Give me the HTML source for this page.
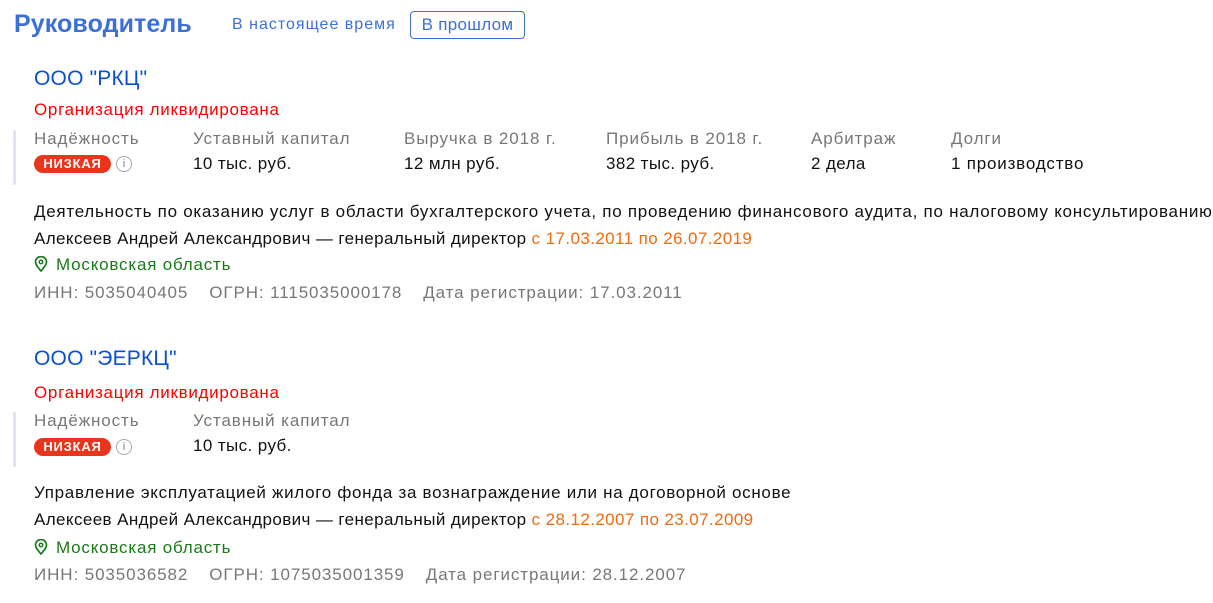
<!DOCTYPE html>
<html><head><meta charset="utf-8"><style>
body{margin:0;width:1213px;height:603px;background:#fff;font-family:"Liberation Sans",sans-serif;position:relative;overflow:hidden;color:#111}
.a{position:absolute;white-space:nowrap;line-height:20px;font-size:17px;letter-spacing:0.9px}
.h{left:14px;top:9px;font-size:25px;font-weight:bold;color:#3d6fd9;line-height:30px;letter-spacing:0.1px}
.blue{color:#3d6fd9}
.btn{left:410px;top:11px;width:113px;height:26px;border:1px solid #3d6fd9;border-radius:4px;color:#3d6fd9;text-align:center;line-height:26px;letter-spacing:0.3px}
.org{font-size:21px;color:#0a50d2;line-height:24px;letter-spacing:0.2px}
.red{color:#f00}
.lbl{color:#777}
.v{letter-spacing:0.4px}
.bar{position:absolute;left:13px;width:3px;background:#dde2f5;border-radius:2px}
.badge{position:absolute;left:34px;width:77px;height:18px;background:#e8351c;border-radius:9px;color:#fff;font-weight:bold;font-size:13px;text-align:center;line-height:18px;letter-spacing:.8px}
.info{position:absolute;left:116px;width:14px;height:14px;border:1.5px solid #aaa;border-radius:50%;color:#aaa;font-size:11px;text-align:center;line-height:14px;font-weight:bold}
.or{color:#f06a0e}
.gr{color:#1a7a1a}
.gray{color:#777}
.g{display:inline-block;width:21px}
</style></head><body>
<div class="a h">Руководитель</div>
<div class="a blue" style="left:232px;top:15px;font-size:16px;letter-spacing:1px">В настоящее время</div>
<div class="a btn">В прошлом</div>

<div class="a org" style="left:34px;top:67px">ООО "РКЦ"</div>
<div class="a red" style="left:34px;top:100px;letter-spacing:0.7px">Организация ликвидирована</div>
<div class="bar" style="top:130px;height:55px"></div>
<div class="a lbl" style="left:34px;top:129px">Надёжность</div>
<div class="a lbl" style="left:193px;top:129px">Уставный капитал</div>
<div class="a lbl" style="left:404px;top:129px">Выручка в 2018 г.</div>
<div class="a lbl" style="left:606px;top:129px">Прибыль в 2018 г.</div>
<div class="a lbl" style="left:811px;top:129px">Арбитраж</div>
<div class="a lbl" style="left:951px;top:129px">Долги</div>
<div class="badge" style="top:155px">НИЗКАЯ</div>
<div class="info" style="top:156px">i</div>
<div class="a v" style="left:193px;top:154px">10 тыс. руб.</div>
<div class="a v" style="left:404px;top:154px">12 млн руб.</div>
<div class="a v" style="left:606px;top:154px">382 тыс. руб.</div>
<div class="a v" style="left:811px;top:154px">2 дела</div>
<div class="a v" style="left:951px;top:154px;letter-spacing:0.8px">1 производство</div>
<div class="a" style="left:34px;top:202px;letter-spacing:0.73px">Деятельность по оказанию услуг в области бухгалтерского учета, по проведению финансового аудита, по налоговому консультированию</div>
<div class="a" style="left:34px;top:229px;letter-spacing:0.4px">Алексеев Андрей Александрович — генеральный директор <span class="or">с 17.03.2011 по 26.07.2019</span></div>
<div class="a gr" style="left:34px;top:255px;letter-spacing:0.8px"><svg width="14" height="16" viewBox="0 0 14 16" style="vertical-align:-2px;margin-right:8px"><path d="M7 15C4 11.5 1.5 8.8 1.5 6A5.5 5.5 0 0 1 12.5 6C12.5 8.8 10 11.5 7 15Z" fill="none" stroke="#1a7a1a" stroke-width="1.7"/><circle cx="7" cy="6" r="1.8" fill="none" stroke="#1a7a1a" stroke-width="1.5"/></svg>Московская область</div>
<div class="a gray" style="left:34px;top:283px">ИНН: 5035040405<span class="g"></span>ОГРН: 1115035000178<span class="g"></span>Дата регистрации: 17.03.2011</div>

<div class="a org" style="left:34px;top:347px">ООО "ЭЕРКЦ"</div>
<div class="a red" style="left:34px;top:383px;letter-spacing:0.7px">Организация ликвидирована</div>
<div class="bar" style="top:412px;height:55px"></div>
<div class="a lbl" style="left:34px;top:411px">Надёжность</div>
<div class="a lbl" style="left:193px;top:411px">Уставный капитал</div>
<div class="badge" style="top:438px">НИЗКАЯ</div>
<div class="info" style="top:439px">i</div>
<div class="a v" style="left:193px;top:436px">10 тыс. руб.</div>
<div class="a" style="left:34px;top:483px;letter-spacing:0.7px">Управление эксплуатацией жилого фонда за вознаграждение или на договорной основе</div>
<div class="a" style="left:34px;top:510px;letter-spacing:0.4px">Алексеев Андрей Александрович — генеральный директор <span class="or">с 28.12.2007 по 23.07.2009</span></div>
<div class="a gr" style="left:34px;top:538px;letter-spacing:0.8px"><svg width="14" height="16" viewBox="0 0 14 16" style="vertical-align:-2px;margin-right:8px"><path d="M7 15C4 11.5 1.5 8.8 1.5 6A5.5 5.5 0 0 1 12.5 6C12.5 8.8 10 11.5 7 15Z" fill="none" stroke="#1a7a1a" stroke-width="1.7"/><circle cx="7" cy="6" r="1.8" fill="none" stroke="#1a7a1a" stroke-width="1.5"/></svg>Московская область</div>
<div class="a gray" style="left:34px;top:565px">ИНН: 5035036582<span class="g"></span>ОГРН: 1075035001359<span class="g"></span>Дата регистрации: 28.12.2007</div>
</body></html>
